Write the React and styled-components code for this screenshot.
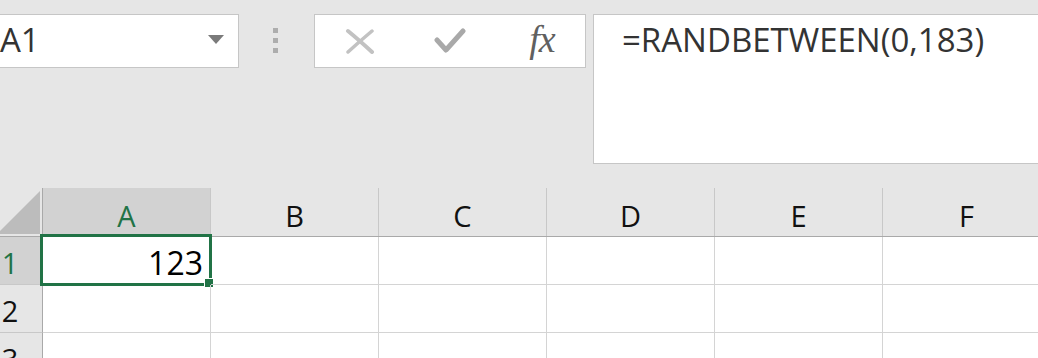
import React from 'react'
import styled, { createGlobalStyle, css } from 'styled-components'

const GlobalStyle = createGlobalStyle`
    html, body {
        margin: 0;
        padding: 0;
        overflow: hidden;
        background: #e6e6e6;
    }
    body {
        font-family: "Open Sans", "Noto Sans", sans-serif;
    }
`

const columns = ['A', 'B', 'C', 'D', 'E', 'F']
const rows = [1, 2, 3]

const App = () => {
    return (
        <>
            <GlobalStyle />
            <Root>
                <Toolbar>
                    <NameBox>
                        <span>A1</span>
                        <DropArrow />
                    </NameBox>
                    <Grip>
                        <i />
                        <i />
                        <i />
                    </Grip>
                    <ButtonBox>
                        <IconSlot>
                            <svg width="30" height="26" viewBox="0 0 30 26">
                                <path d="M3 3 Q14 12 27 24" stroke="#c2c2c2" strokeWidth="4" fill="none" strokeLinecap="round" />
                                <path d="M27 3 Q15 13 3 24" stroke="#c2c2c2" strokeWidth="3.5" fill="none" strokeLinecap="round" />
                            </svg>
                        </IconSlot>
                        <IconSlot>
                            <svg width="32" height="28" viewBox="0 0 32 28">
                                <path d="M3 13 L12 23 L29 4" stroke="#a9a9a9" strokeWidth="5" fill="none" strokeLinecap="round" strokeLinejoin="round" />
                            </svg>
                        </IconSlot>
                        <IconSlot>
                            <Fx>fx</Fx>
                        </IconSlot>
                    </ButtonBox>
                    <FormulaBar>=RANDBETWEEN(0,183)</FormulaBar>
                </Toolbar>
                <Sheet>
                    <HeaderRow>
                        <Corner />
                        {columns.map(c => (
                            <ColHeader key={c} selected={c === 'A'}>{c}</ColHeader>
                        ))}
                    </HeaderRow>
                    {rows.map(r => (
                        <Row key={r}>
                            <RowHeader selected={r === 1}>{r}</RowHeader>
                            {columns.map(c => (
                                <Cell key={c}>
                                    {r === 1 && c === 'A' && (
                                        <>
                                            <Value>123</Value>
                                            <Selection />
                                            <FillHandle />
                                        </>
                                    )}
                                </Cell>
                            ))}
                        </Row>
                    ))}
                </Sheet>
            </Root>
        </>
    )
}

export default App

const Root = styled.div`
    width: 1100px;
    height: 358px;
    margin-left: -22px;
    background: #e6e6e6;
    overflow: hidden;
`
const Toolbar = styled.div`
    height: 188px;
    box-sizing: border-box;
    padding-top: 14px;
    display: flex;
    align-items: flex-start;
`
const NameBox = styled.div`
    margin-left: 8px;
    width: 253px;
    height: 54px;
    box-sizing: border-box;
    border: 1px solid #c6c6c6;
    background: #fff;
    display: flex;
    align-items: center;
    justify-content: space-between;
    padding: 0 14px 0 13px;
    color: #333;
    font-size: 33px;

    span{
        margin-top: -3px;
    }
`
const DropArrow = styled.div`
    width: 0;
    height: 0;
    border-left: 8.5px solid transparent;
    border-right: 8.5px solid transparent;
    border-top: 9px solid #7a7a7a;
    margin-top: -4px;
`
const Grip = styled.div`
    margin: 14px 0 0 34px;
    display: flex;
    flex-direction: column;
    gap: 5px;

    i{
        display: block;
        width: 5px;
        height: 5px;
        background: #adadad;
    }
`
const ButtonBox = styled.div`
    margin-left: 36px;
    width: 272px;
    height: 54px;
    box-sizing: border-box;
    border: 1px solid #c6c6c6;
    background: #fff;
    display: flex;
`
const IconSlot = styled.div`
    width: 90px;
    display: flex;
    align-items: center;
    justify-content: center;
`
const Fx = styled.span`
    font-family: "Liberation Serif", serif;
    font-style: italic;
    font-size: 38px;
    color: #606060;
    margin: -4px 0 0 4px;
    letter-spacing: -1px;
`
const FormulaBar = styled.div`
    margin-left: 7px;
    flex: 1;
    height: 150px;
    box-sizing: border-box;
    border: 1px solid #c6c6c6;
    border-right: none;
    background: #fff;
    padding: 3px 0 0 28px;
    color: #333;
    font-size: 33px;
    line-height: 44px;
    white-space: nowrap;
`
const Sheet = styled.div`
    background: #fff;
`
const HeaderRow = styled.div`
    display: flex;
    height: 49px;
    box-sizing: border-box;
    border-bottom: 1px solid #a9a9a9;
    background: #e6e6e6;
`
const Corner = styled.div`
    position: relative;
    width: 65px;
    flex: none;
    box-sizing: border-box;
    border-right: 1px solid #a9a9a9;

    &::after{
        content: '';
        position: absolute;
        right: 2px;
        bottom: 2px;
        width: 43px;
        height: 43px;
        background: #bcbcbc;
        clip-path: polygon(100% 0, 100% 100%, 0 100%);
    }
`
const selectedHeader = css`
    background: #d2d2d2;
    color: #217346;
`
const ColHeader = styled.div`
    width: 168px;
    flex: none;
    box-sizing: border-box;
    border-right: 1px solid #c8c8c8;
    display: flex;
    justify-content: center;
    align-items: center;
    padding-top: 6px;
    font-size: 29px;
    color: #111;
    ${p => p.selected && selectedHeader}
`
const Row = styled.div`
    display: flex;
    height: 48px;
`
const RowHeader = styled.div`
    width: 65px;
    flex: none;
    box-sizing: border-box;
    border-right: 1px solid #a9a9a9;
    border-bottom: 1px solid #c8c8c8;
    background: #e6e6e6;
    display: flex;
    justify-content: center;
    align-items: center;
    padding-top: 4px;
    font-size: 29px;
    color: #111;
    ${p => p.selected && selectedHeader}
`
const Cell = styled.div`
    position: relative;
    width: 168px;
    flex: none;
    box-sizing: border-box;
    border-right: 1px solid #d4d4d4;
    border-bottom: 1px solid #d4d4d4;
    display: flex;
    align-items: center;
    justify-content: flex-end;
    padding: 4px 7px 0 0;
`
const Value = styled.span`
    font-size: 32px;
    color: #000;
`
const Selection = styled.div`
    position: absolute;
    left: -3px;
    top: -3px;
    right: -2px;
    bottom: -2px;
    border: 3px solid #217346;
    pointer-events: none;
`
const FillHandle = styled.div`
    position: absolute;
    right: -3px;
    bottom: -3px;
    width: 8px;
    height: 8px;
    box-sizing: border-box;
    background: #217346;
    box-shadow: 0 0 0 1px #fff;
`
